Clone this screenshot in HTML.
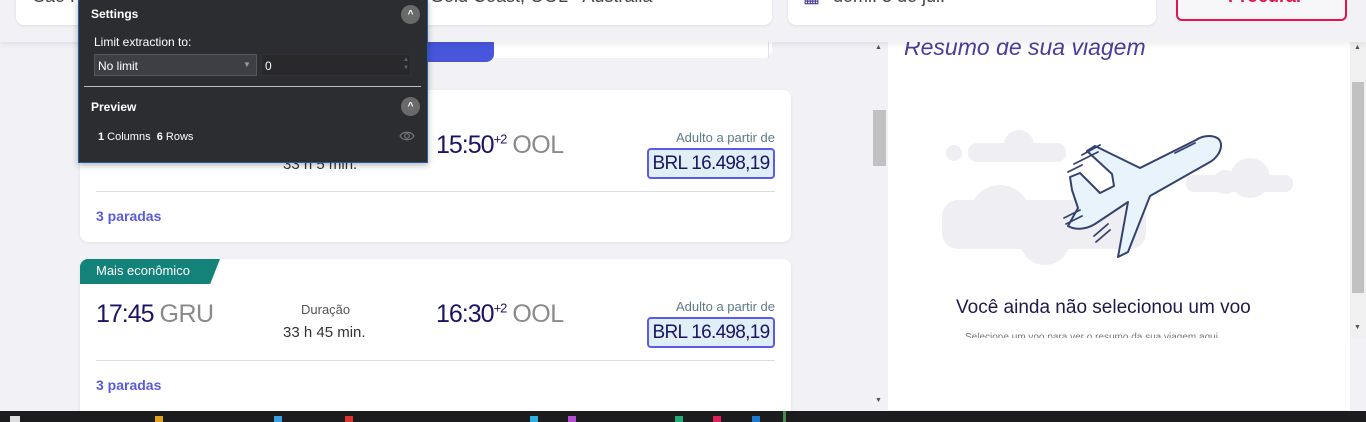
<!DOCTYPE html>
<html><head><meta charset="utf-8"><style>
*{margin:0;padding:0;box-sizing:border-box}
body{width:1366px;height:422px;overflow:hidden;background:#f1f1f6;font-family:"Liberation Sans",sans-serif;position:relative}
.a{position:absolute}
.card{position:absolute;background:#fff;border-radius:8px;box-shadow:0 1px 3px rgba(0,0,0,.08)}
.t{position:absolute;white-space:nowrap}
.time{font-size:25px;color:#1b1464;letter-spacing:-1px}
.ap{font-size:25px;color:#8a8a8a;letter-spacing:-0.5px}
.price{position:absolute;left:647px;width:128px;height:31px;background:#e0eef6;border:2px solid #5b5be8;border-radius:4px;font-size:19px;color:#1b1464;text-align:center;line-height:27px;letter-spacing:-0.7px}
.hr{position:absolute;left:96px;width:679px;height:1px;background:#dcdcdc}
.par{position:absolute;left:96px;font-size:14px;font-weight:bold;color:#5a5ae0}
.dk{color:#fff;font-size:12px}
.circ{position:absolute;width:19px;height:19px;border-radius:50%;background:#6a6a6a;color:#fff;font-size:10px;text-align:center;line-height:19px;font-weight:bold}
</style></head><body>

<div class="a" style="left:300px;top:30px;width:194px;height:32px;background:#4756db;border-radius:0 0 8px 0"></div>
<div class="a" style="left:494px;top:30px;width:278px;height:28px;background:#fff;border-radius:0 0 8px 0"></div>
<div class="a" style="left:768px;top:42px;width:1px;height:16px;background:#e3e3e3"></div>

<div class="card" style="left:80px;top:90px;width:711px;height:152px"></div>
<div class="t time" style="left:436px;top:131px">15:50<sup style="font-size:13px">+2</sup> <span class="ap">OOL</span></div>
<div class="t" style="left:283px;top:156px;font-size:15px;color:#333">33 h 5 min.</div>
<div class="t" style="right:591px;top:130px;font-size:13px;color:#5d7b88">Adulto a partir de</div>
<div class="price" style="top:148px">BRL 16.498,19</div>
<div class="hr" style="top:191px"></div>
<div class="par" style="top:208px">3 paradas</div>

<div class="card" style="left:80px;top:259px;width:711px;height:160px"></div>
<div class="a" style="left:80px;top:259px;width:140px;height:25px;background:#13837a;border-radius:8px 0 12px 0;clip-path:polygon(0 0,100% 0,93% 100%,0 100%)"></div>
<div class="t" style="left:96px;top:263px;font-size:13px;color:#fff">Mais econômico</div>
<div class="t time" style="left:96px;top:300px">17:45 <span class="ap">GRU</span></div>
<div class="t" style="left:301px;top:302px;font-size:13px;color:#555">Duração</div>
<div class="t" style="left:283px;top:324px;font-size:15px;color:#333">33 h 45 min.</div>
<div class="t time" style="left:436px;top:300px">16:30<sup style="font-size:13px">+2</sup> <span class="ap">OOL</span></div>
<div class="t" style="right:591px;top:299px;font-size:13px;color:#5d7b88">Adulto a partir de</div>
<div class="price" style="top:317px">BRL 16.498,19</div>
<div class="hr" style="top:360px"></div>
<div class="par" style="top:377px">3 paradas</div>

<div class="a" style="left:872px;top:42px;width:15px;height:368px;background:#f1f1f6"></div>
<div class="a" style="left:873px;top:110px;width:13px;height:56px;background:#c1c1c1"></div>
<div class="t" style="left:875px;top:44px;font-size:7px;color:#555">▲</div>
<div class="t" style="left:875px;top:397px;font-size:7px;color:#555">▼</div>

<div class="a" style="left:888px;top:30px;width:462px;height:380px;background:#fff"></div>
<div class="t" style="left:904px;top:34px;font-size:23px;font-style:italic;color:#4a3d9c">Resumo de sua viagem</div>
<svg class="a" style="left:888px;top:100px" width="462" height="180" viewBox="888 100 462 180">
<g fill="#eeeef3">
<rect x="942" y="200" width="204" height="49" rx="16"/><circle cx="1000" cy="215" r="30"/><circle cx="1045" cy="240" r="25"/>
<rect x="968" y="143" width="98" height="19" rx="9"/><circle cx="1019" cy="145" r="15"/><circle cx="990" cy="152" r="9"/><circle cx="954" cy="153" r="8"/>
<rect x="1186" y="175" width="107" height="17" rx="8"/><circle cx="1250" cy="178" r="20"/><circle cx="1225" cy="182" r="12"/>
</g>
<g fill="#e9f3fc" stroke="#34436e" stroke-width="2" stroke-linejoin="round" stroke-linecap="round">
<path d="M1215,137 C1225,140 1222,155 1210,162 L1150,196 L1128,252 L1118,257 L1128,202 L1095,224 C1085,230 1075,230 1068,226 L1078,208 L1072,190 L1070,177 L1080,173 L1100,193 L1114,186 L1112,174 L1087,151 L1095,146 L1140,168 L1196,140 C1202,136 1210,135 1215,137 Z"/>
</g>
<g stroke="#34436e" stroke-width="1.8" fill="none" stroke-linecap="round">
<path d="M1100,145 L1082,155 M1098,152 L1074,164 M1082,165 L1068,172"/>
<path d="M1080,210 L1064,218 M1082,216 L1066,224"/>
<path d="M1108,224 L1094,236 M1110,230 L1096,242"/>
<path d="M1175,153 L1195,143"/>
</g>
</svg>
<div class="t" style="left:956px;top:297px;font-size:19px;color:#1e1a4a">Você ainda não selecionou um voo</div>
<div class="t" style="left:965px;top:332px;font-size:10px;color:#777;height:6px;overflow:hidden;line-height:12px">Selecione um voo para ver o resumo da sua viagem aqui</div>
<div class="a" style="left:1350px;top:42px;width:16px;height:296px;background:#f0f0f0"></div>
<div class="a" style="left:1352px;top:82px;width:12px;height:211px;background:#c1c1c1"></div>
<div class="t" style="left:1354px;top:44px;font-size:7px;color:#555">▲</div>
<div class="t" style="left:1354px;top:324px;font-size:7px;color:#555">▼</div>

<div class="a" style="left:0;top:0;width:1366px;height:42px;background:#f1f1f6;box-shadow:0 2px 6px rgba(0,0,0,.08)"></div>
<div class="card" style="left:16px;top:-10px;width:756px;height:35px"></div>
<div class="card" style="left:788px;top:-10px;width:368px;height:35px"></div>
<div class="t" style="left:33px;top:-14px;font-size:18px;color:#444">São Paulo, GRU</div>
<div class="t" style="left:430px;top:-14px;font-size:18px;color:#444">Gold Coast, OOL - Australia</div>
<div class="t" style="left:803px;top:-14px;font-size:18px;color:#3a2d8c">▦</div>
<div class="t" style="left:833px;top:-14px;font-size:18px;color:#444">domi. 5 de jul.</div>
<div class="a" style="left:1176px;top:-10px;width:171px;height:31px;border:2px solid #e8114b;border-radius:6px;background:#f7f7fa"></div>
<div class="t" style="left:1228px;top:-14px;font-size:18px;font-weight:bold;color:#e8114b">Procurar</div>

<div class="a" style="left:78px;top:-2px;width:350px;height:165px;background:#2c2d31;border:1px solid #1f5fa6;box-shadow:0 2px 6px rgba(0,0,0,.3)"></div>
<div class="t dk" style="left:91px;top:7px;font-weight:bold">Settings</div>
<div class="circ" style="left:401px;top:5px">^</div>
<div class="t dk" style="left:94px;top:35px">Limit extraction to:</div>
<div class="a" style="left:94px;top:54px;width:163px;height:22px;background:#3e3f45;border:1px solid #55565c"></div>
<div class="t dk" style="left:98px;top:59px">No limit</div>
<div class="t" style="left:243px;top:60px;font-size:8px;color:#999">▼</div>
<div class="a" style="left:261px;top:54px;width:150px;height:22px;background:#29292c;border:1px solid #323236"></div>
<div class="t dk" style="left:265px;top:59px">0</div>
<div class="t" style="left:403px;top:56px;font-size:6px;color:#666;line-height:8px">▲<br>▼</div>
<div class="a" style="left:84px;top:86px;width:337px;height:1px;background:#bdbdbd"></div>
<div class="t dk" style="left:91px;top:100px;font-weight:bold">Preview</div>
<div class="circ" style="left:401px;top:97px">^</div>
<div class="t dk" style="left:98px;top:131px;font-size:11px"><b>1</b> Columns &nbsp;<b>6</b> Rows</div>
<svg class="a" style="left:399px;top:130px" width="16" height="12" viewBox="0 0 16 12"><path d="M1,6 C4,1 12,1 15,6 C12,11 4,11 1,6Z" fill="none" stroke="#777" stroke-width="1.2"/><circle cx="8" cy="6" r="2.3" fill="none" stroke="#777" stroke-width="1.2"/></svg>

<div class="a" style="left:0;top:411px;width:1366px;height:11px;background:#1c1c1e"></div>
<div class="a" style="left:10px;top:416px;width:10px;height:6px;background:#ddd"></div>
<div class="a" style="left:155px;top:416px;width:8px;height:6px;background:#e0a21c"></div>
<div class="a" style="left:274px;top:416px;width:8px;height:6px;background:#3aa0e0"></div>
<div class="a" style="left:345px;top:416px;width:8px;height:6px;background:#d33"></div>
<div class="a" style="left:530px;top:416px;width:8px;height:6px;background:#2bb0e0"></div>
<div class="a" style="left:568px;top:416px;width:8px;height:6px;background:#b050d0"></div>
<div class="a" style="left:675px;top:416px;width:8px;height:6px;background:#2a7"></div>
<div class="a" style="left:713px;top:416px;width:8px;height:6px;background:#e0205a"></div>
<div class="a" style="left:752px;top:416px;width:8px;height:6px;background:#1a7ad0"></div>
<div class="a" style="left:783px;top:411px;width:3px;height:11px;background:#4a8a4a"></div>
</body></html>
